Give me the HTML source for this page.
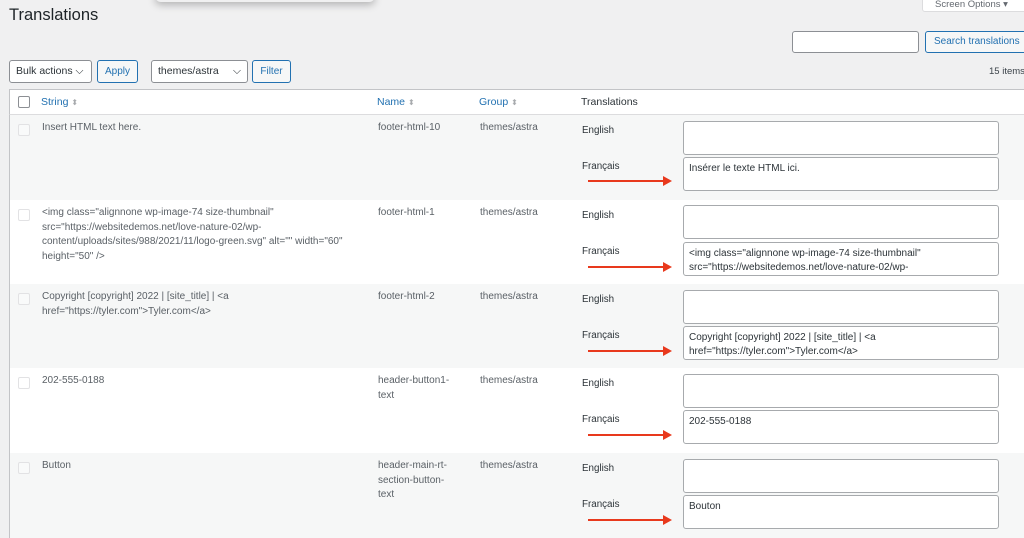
<!DOCTYPE html>
<html><head><meta charset="utf-8"><style>
*{box-sizing:border-box;margin:0;padding:0}
body{width:1024px;height:537px;overflow:hidden;background:#f0f0f1;font-family:"Liberation Sans",sans-serif;color:#3c434a;position:relative}
.a{position:absolute;white-space:nowrap}
.btn{position:absolute;border:1px solid #2271b1;border-radius:3px;background:#f6f7f7;color:#2271b1;font-size:10px;text-align:center}
.sel{position:absolute;border:1px solid #8c8f94;border-radius:3px;background:#fff;font-size:10.5px;color:#2c3338;padding-left:6px}
.row{position:absolute;left:9px;width:1020px;height:85px;border-left:1px solid #c3c4c7}
.t{font-size:10px;line-height:14.5px;color:#5a6066;position:absolute}
.lab{font-size:9.8px;color:#2c3338;position:absolute}
.ta{position:absolute;left:673px;width:316px;height:34px;background:#fff;border:1px solid #a7aaad;border-radius:3px;font-size:10px;line-height:14px;color:#2c3338;padding:4px 5px;white-space:nowrap;overflow:hidden}
.cb{position:absolute;left:8px;top:9px;width:12px;height:12px;border:1px solid #e2e2e4;border-radius:2px;background:rgba(255,255,255,.4)}
.ar{position:absolute;left:578px;width:82px;height:2px;background:#e8391d}
.ar:after{content:"";position:absolute;right:-2px;top:-4px;border-left:9px solid #e8391d;border-top:5px solid transparent;border-bottom:5px solid transparent}
</style></head><body>
<div class="a" style="left:155px;top:-10px;width:220px;height:12px;border-radius:10px;box-shadow:0 3px 8px rgba(0,0,0,.25);background:#f0f0f1"></div>
<div class="a" style="left:9px;top:6px;font-size:16.5px;color:#1d2327">Translations</div>
<div class="a" style="left:922px;top:-8px;width:110px;height:20px;background:#fff;border:1px solid #dcdcde;border-radius:3px;font-size:9.5px;color:#646970;padding:6px 0 0 12px">Screen Options ▾</div>
<div class="a" style="left:792px;top:31px;width:127px;height:22px;background:#fff;border:1px solid #8c8f94;border-radius:3px"></div>
<div class="btn" style="left:925px;top:31px;width:105px;height:22px;line-height:20px;text-align:left;padding-left:8px">Search translations</div>
<div class="a" style="left:989px;top:66px;font-size:9.5px;color:#3c434a">15 items</div>
<div class="sel" style="left:9px;top:60px;width:83px;height:23px;line-height:21px">Bulk actions ⌵</div>
<div class="btn" style="left:97px;top:60px;width:41px;height:23px;line-height:21px">Apply</div>
<div class="sel" style="left:151px;top:60px;width:97px;height:23px;line-height:21px">themes/astra<span style="position:absolute;right:6px">⌵</span></div>
<div class="btn" style="left:252px;top:60px;width:39px;height:23px;line-height:21px">Filter</div>
<div class="row" style="top:89px;height:26px;background:#fff;border-top:1px solid #c3c4c7;border-bottom:1px solid #dcdcde">
<div class="cb" style="top:6px;border-color:#8c8f94;background:#fff"></div>
<div class="a" style="left:31px;top:6px;font-size:10.5px;color:#2271b1">String <span style="color:#a7aaad;font-size:8px">⬍</span></div>
<div class="a" style="left:367px;top:6px;font-size:10.5px;color:#2271b1">Name <span style="color:#a7aaad;font-size:8px">⬍</span></div>
<div class="a" style="left:469px;top:6px;font-size:10.5px;color:#2271b1">Group <span style="color:#a7aaad;font-size:8px">⬍</span></div>
<div class="a" style="left:571px;top:6px;font-size:10.5px;color:#2c3338">Translations</div>
</div>

<div class="row" style="top:115px;background:#f6f7f7"><div class="cb"></div>
<div class="t" style="left:32px;top:6px">Insert HTML text here.</div>
<div class="t" style="left:368px;top:6px">footer-html-10</div>
<div class="t" style="left:470px;top:6px">themes/astra</div>
<div class="lab" style="left:572px;top:10px">English</div><div class="ta" style="top:6px"></div>
<div class="lab" style="left:572px;top:46px">Français</div><div class="ta" style="top:42px">Insérer le texte HTML ici.</div><div class="ar" style="top:65px"></div></div>

<div class="row" style="top:200px;background:#fff"><div class="cb"></div>
<div class="t" style="left:32px;top:6px">&lt;img class="alignnone wp-image-74 size-thumbnail"<br>src="https://websitedemos.net/love-nature-02/wp-<br>content/uploads/sites/988/2021/11/logo-green.svg" alt="" width="60"<br>height="50" /&gt;</div>
<div class="t" style="left:368px;top:6px">footer-html-1</div>
<div class="t" style="left:470px;top:6px">themes/astra</div>
<div class="lab" style="left:572px;top:10px">English</div><div class="ta" style="top:5px"></div>
<div class="lab" style="left:572px;top:46px">Français</div><div class="ta" style="top:42px">&lt;img class="alignnone wp-image-74 size-thumbnail"<br>src="https://websitedemos.net/love-nature-02/wp-</div><div class="ar" style="top:66px"></div></div>

<div class="row" style="top:284px;background:#f6f7f7"><div class="cb"></div>
<div class="t" style="left:32px;top:6px">Copyright [copyright] 2022 | [site_title] | &lt;a<br>href="https://tyler.com"&gt;Tyler.com&lt;/a&gt;</div>
<div class="t" style="left:368px;top:6px">footer-html-2</div>
<div class="t" style="left:470px;top:6px">themes/astra</div>
<div class="lab" style="left:572px;top:10px">English</div><div class="ta" style="top:6px"></div>
<div class="lab" style="left:572px;top:46px">Français</div><div class="ta" style="top:42px">Copyright [copyright] 2022 | [site_title] | &lt;a<br>href="https://tyler.com"&gt;Tyler.com&lt;/a&gt;</div><div class="ar" style="top:66px"></div></div>

<div class="row" style="top:368px;background:#fff"><div class="cb"></div>
<div class="t" style="left:32px;top:6px">202-555-0188</div>
<div class="t" style="left:368px;top:6px">header-button1-<br>text</div>
<div class="t" style="left:470px;top:6px">themes/astra</div>
<div class="lab" style="left:572px;top:10px">English</div><div class="ta" style="top:6px"></div>
<div class="lab" style="left:572px;top:46px">Français</div><div class="ta" style="top:42px">202-555-0188</div><div class="ar" style="top:66px"></div></div>

<div class="row" style="top:453px;background:#f6f7f7"><div class="cb"></div>
<div class="t" style="left:32px;top:6px">Button</div>
<div class="t" style="left:368px;top:6px">header-main-rt-<br>section-button-<br>text</div>
<div class="t" style="left:470px;top:6px">themes/astra</div>
<div class="lab" style="left:572px;top:10px">English</div><div class="ta" style="top:6px"></div>
<div class="lab" style="left:572px;top:46px">Français</div><div class="ta" style="top:42px">Bouton</div><div class="ar" style="top:66px"></div></div>
</body></html>
